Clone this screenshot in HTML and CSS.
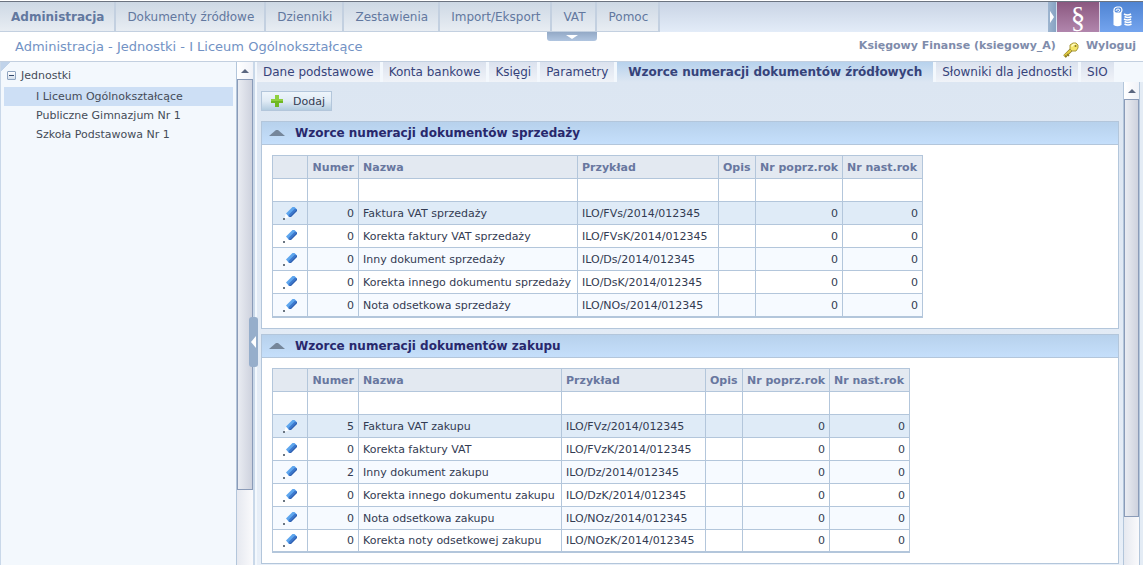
FILE: index.html
```html
<!DOCTYPE html>
<html lang="pl">
<head>
<meta charset="utf-8">
<title>Administracja - Jednostki</title>
<link rel="stylesheet" href="styles.css">
</head>
<body>
<svg class="defs" aria-hidden="true">
  <symbol id="pencil" viewBox="0 0 16 16">
    <path d="M4 8.500l3.500 3.500L2 14z" fill="#fff"/>
    <path d="M4 8.500L10.500 2h2L15 4.500 8.500 11.500 7 12z" fill="#5ea6ee"/>
    <path d="M6.500 10L13 3.500l2 1v1L8.500 12H7z" fill="#3d78cc"/>
    <path d="M7.500 12L15 4.500V6L9 12z" fill="#2b5cae"/>
    <rect x="1" y="13" width="2" height="2" fill="#6b7682"/>
  </symbol>
</svg>
<header class="topbar">
  <nav class="menu">
    <a class="menu-item current" href="#">Administracja</a>
    <a class="menu-item" href="#">Dokumenty źródłowe</a>
    <a class="menu-item" href="#">Dzienniki</a>
    <a class="menu-item" href="#">Zestawienia</a>
    <a class="menu-item" href="#">Import/Eksport</a>
    <a class="menu-item" href="#">VAT</a>
    <a class="menu-item" href="#">Pomoc</a>
  </nav>
  <div class="modules">
    <button class="module-arrow" type="button" aria-label="Moduły"><svg width="4" height="12" viewBox="0 0 4 12"><path d="M0 0l4 6-4 6z" fill="#fff"/></svg></button>
    <button class="module law" type="button">§</button>
    <button class="module finance" type="button" aria-label="Finanse">
      <svg width="20" height="22" viewBox="0 0 20 22" fill="none">
        <path d="M1.500 5v14q4 2.500 8 0V3z" fill="#fff"/>
        <path d="M2 5V4q0-2.500 3-3h3q2 .5 2 3t-2 3H4Q2 7 2 5z" fill="#5b90df" stroke="#fff" stroke-width="1.200"/>
        <path d="M4 5q0-2 2-2t1.500 2q-1 1-2 0" stroke="#fff"/>
        <path d="M12 8q3.500 2 7 0M12.500 10.500q3.500 2 7 0M12 13q3.500 2 7 0M12.500 15.500q3.500 2 7 0M12.500 18q3.500 2 7 0" stroke="#fff" stroke-width="1.700"/>
      </svg>
    </button>
  </div>
  <button class="collapse-top" type="button" aria-label="Zwiń menu"><svg width="12" height="4" viewBox="0 0 12 4"><path d="M0 0h12L6 4z" fill="#fff"/></svg></button>
</header>
<div class="subbar">
  <div class="crumbs">Administracja - Jednostki - I Liceum Ogólnokształcące</div>
  <div class="user">
    <span>Księgowy Finanse (ksiegowy_A)</span>
    <svg class="key" width="16" height="16" viewBox="0 0 16 16">
      <path d="M8 8L1.500 14.500" stroke="#8d7d23" stroke-width="3.500"/>
      <path d="M8 8L1.500 14" stroke="#e6cf45" stroke-width="2"/>
      <path d="M4 12l2 2M2 13.500l1.500 1.500" stroke="#8d7d23" stroke-width="1.500"/>
      <path d="M7 3l3-2h3l2 2v3l-2 3h-4L7 7z" fill="#f4e568" stroke="#a8983c"/>
      <path d="M8.500 4.500l2-2h2" stroke="#fffbc4" stroke-width="1.500" fill="none"/>
      <circle cx="12.500" cy="4" r="1" fill="#857823"/>
    </svg>
    <a href="#">Wyloguj</a>
  </div>
</div>
<div class="workspace">
  <aside class="side">
    <div class="tree">
      <div class="tree-root"><button class="toggle" type="button" aria-label="Zwiń Jednostki"></button><span>Jednostki</span></div>
      <a class="tree-item selected" href="#">I Liceum Ogólnokształcące</a>
      <a class="tree-item" href="#">Publiczne Gimnazjum Nr 1</a>
      <a class="tree-item" href="#">Szkoła Podstawowa Nr 1</a>
    </div>
    <div class="scrollbar side-scroll"><div class="scroll-up"></div><div class="scroll-thumb"></div></div>
  </aside>
  <div class="splitter"><button class="collapse-side" type="button" aria-label="Zwiń panel"><svg width="5" height="12" viewBox="0 0 5 12"><path d="M5 0L0 6l5 6z" fill="#fff"/></svg></button></div>
  <main class="main">
    <nav class="tabs">
      <a class="tab" href="#">Dane podstawowe</a>
      <a class="tab" href="#">Konta bankowe</a>
      <a class="tab" href="#">Księgi</a>
      <a class="tab" href="#">Parametry</a>
      <a class="tab active" href="#">Wzorce numeracji dokumentów źródłowych</a>
      <a class="tab" href="#">Słowniki dla jednostki</a>
      <a class="tab" href="#">SIO</a>
    </nav>
    <div class="pane">
      <div class="content">
        <button class="add" type="button"><svg width="12" height="12" viewBox="0 0 12 12"><path d="M4 0h4v4h4v4H8v4H4V8H0V4h4z" fill="#6fb822"/><path d="M4 0h4v4h4v2H0V4h4z" fill="#8fd03f"/></svg>Dodaj</button>
        <section class="panel">
          <h2 class="panel-title"><svg width="16" height="6" viewBox="0 0 16 6"><path d="M0 6L7 0h2l7 6z" fill="#75869a"/></svg>Wzorce numeracji dokumentów sprzedaży</h2>
          <table class="grid">
            <colgroup><col class="c-edit"><col class="c-num"><col class="c-name-a"><col class="c-ex-a"><col class="c-desc"><col class="c-prev"><col class="c-next"></colgroup>
            <thead>
              <tr><th></th><th class="r">Numer</th><th>Nazwa</th><th>Przykład</th><th>Opis</th><th>Nr poprz.rok</th><th>Nr nast.rok</th></tr>
            </thead>
            <tbody>
              <tr class="filter"><td></td><td></td><td></td><td></td><td></td><td></td><td></td></tr>
              <tr class="hot"><td class="edit"><svg width="16" height="16"><use href="#pencil"/></svg></td><td class="r">0</td><td>Faktura VAT sprzedaży</td><td>ILO/FVs/2014/012345</td><td></td><td class="r">0</td><td class="r">0</td></tr>
              <tr><td class="edit"><svg width="16" height="16"><use href="#pencil"/></svg></td><td class="r">0</td><td>Korekta faktury VAT sprzedaży</td><td>ILO/FVsK/2014/012345</td><td></td><td class="r">0</td><td class="r">0</td></tr>
              <tr class="alt"><td class="edit"><svg width="16" height="16"><use href="#pencil"/></svg></td><td class="r">0</td><td>Inny dokument sprzedaży</td><td>ILO/Ds/2014/012345</td><td></td><td class="r">0</td><td class="r">0</td></tr>
              <tr><td class="edit"><svg width="16" height="16"><use href="#pencil"/></svg></td><td class="r">0</td><td>Korekta innego dokumentu sprzedaży</td><td>ILO/DsK/2014/012345</td><td></td><td class="r">0</td><td class="r">0</td></tr>
              <tr class="alt"><td class="edit"><svg width="16" height="16"><use href="#pencil"/></svg></td><td class="r">0</td><td>Nota odsetkowa sprzedaży</td><td>ILO/NOs/2014/012345</td><td></td><td class="r">0</td><td class="r">0</td></tr>
            </tbody>
          </table>
        </section>
        <section class="panel">
          <h2 class="panel-title"><svg width="16" height="6" viewBox="0 0 16 6"><path d="M0 6L7 0h2l7 6z" fill="#75869a"/></svg>Wzorce numeracji dokumentów zakupu</h2>
          <table class="grid">
            <colgroup><col class="c-edit"><col class="c-num"><col class="c-name-b"><col class="c-ex-b"><col class="c-desc"><col class="c-prev"><col class="c-next"></colgroup>
            <thead>
              <tr><th></th><th class="r">Numer</th><th>Nazwa</th><th>Przykład</th><th>Opis</th><th>Nr poprz.rok</th><th>Nr nast.rok</th></tr>
            </thead>
            <tbody>
              <tr class="filter"><td></td><td></td><td></td><td></td><td></td><td></td><td></td></tr>
              <tr class="hot"><td class="edit"><svg width="16" height="16"><use href="#pencil"/></svg></td><td class="r">5</td><td>Faktura VAT zakupu</td><td>ILO/FVz/2014/012345</td><td></td><td class="r">0</td><td class="r">0</td></tr>
              <tr><td class="edit"><svg width="16" height="16"><use href="#pencil"/></svg></td><td class="r">0</td><td>Korekta faktury VAT</td><td>ILO/FVzK/2014/012345</td><td></td><td class="r">0</td><td class="r">0</td></tr>
              <tr class="alt"><td class="edit"><svg width="16" height="16"><use href="#pencil"/></svg></td><td class="r">2</td><td>Inny dokument zakupu</td><td>ILO/Dz/2014/012345</td><td></td><td class="r">0</td><td class="r">0</td></tr>
              <tr><td class="edit"><svg width="16" height="16"><use href="#pencil"/></svg></td><td class="r">0</td><td>Korekta innego dokumentu zakupu</td><td>ILO/DzK/2014/012345</td><td></td><td class="r">0</td><td class="r">0</td></tr>
              <tr class="alt"><td class="edit"><svg width="16" height="16"><use href="#pencil"/></svg></td><td class="r">0</td><td>Nota odsetkowa zakupu</td><td>ILO/NOz/2014/012345</td><td></td><td class="r">0</td><td class="r">0</td></tr>
              <tr><td class="edit"><svg width="16" height="16"><use href="#pencil"/></svg></td><td class="r">0</td><td>Korekta noty odsetkowej zakupu</td><td>ILO/NOzK/2014/012345</td><td></td><td class="r">0</td><td class="r">0</td></tr>
            </tbody>
          </table>
        </section>
      </div>
      <div class="scrollbar main-scroll"><div class="scroll-up"></div><div class="scroll-thumb"></div></div>
    </div>
  </main>
</div>
</body>
</html>
```
FILE: styles.css
```css
* { box-sizing: border-box; }
html, body { height: 100%; }
body {
  margin: 0;
  display: flex;
  flex-direction: column;
  overflow: hidden;
  background: #fff;
  color: #333b52;
  font-family: Verdana, "DejaVu Sans", sans-serif;
  font-size: 11px;
}
a { color: inherit; text-decoration: none; }
button { font: inherit; color: inherit; margin: 0; padding: 0; border: 0; cursor: pointer; }
svg { display: block; flex: none; }
.defs { position: absolute; width: 0; height: 0; }

.topbar {
  position: relative;
  flex: none;
  display: flex;
  justify-content: space-between;
  height: 31px;
  margin-top: 1px;
  border-top: 1px solid #6b7380;
  background: linear-gradient(#c9d4e5, #e3ecf8);
}
.menu { display: flex; }
.menu-item {
  display: flex;
  align-items: center;
  padding: 0 10px 0 11px;
  border-right: 2px solid #c3d0e0;
  border-bottom: 1px solid #c3d0e0;
  background: linear-gradient(#cdd8e4, #e8edf3);
  color: #62789f;
  font-size: 12px;
  white-space: nowrap;
}
.menu-item.current { font-weight: bold; }
.modules { display: flex; }
.module-arrow {
  display: flex;
  align-items: center;
  justify-content: center;
  width: 8px;
  margin-right: 1px;
  background: linear-gradient(90deg, #9db5d0, #86a2c2);
}
.module { display: flex; align-items: center; justify-content: center; width: 43px; }
.law {
  background: linear-gradient(#8b5880, #b186ad);
  border-right: 1px solid #d9cfe4;
  color: #fff;
  font-family: "Liberation Serif", serif;
  font-size: 29px;
  line-height: 28px;
}
.finance { background: linear-gradient(#4f84d3, #74a4ee); }
.collapse-top {
  position: absolute;
  left: 50%;
  top: 30px;
  width: 50px;
  height: 9px;
  margin-left: -25px;
  display: flex;
  align-items: center;
  justify-content: center;
  border-radius: 0 0 3px 3px;
  background: linear-gradient(#93a9c6, #b0c5e0);
}

.subbar {
  flex: none;
  display: flex;
  justify-content: space-between;
  height: 29px;
  padding: 0 7px 0 15px;
}
.crumbs { font-size: 13px; line-height: 29px; color: #7292c4; }
.user {
  display: flex;
  align-items: center;
  gap: 7px;
  height: 26px;
  font-weight: bold;
  color: #7f8cab;
}
.key { align-self: flex-end; }

.workspace { flex: 1; min-height: 0; display: flex; border-top: 1px solid #c3d0e0; }
.side {
  flex: none;
  display: flex;
  width: 253px;
  background: linear-gradient(135deg, #c0d3ea 7px, #f3f8fd 7px);
  border-left: 1px solid #c9d8e9;
}
.tree { flex: 1; padding: 4px 3px; color: #454c58; }
.tree-root { display: flex; align-items: center; gap: 5px; height: 19px; padding-left: 3px; margin-bottom: 2px; }
.toggle {
  position: relative;
  width: 9px;
  height: 9px;
  border: 1px solid #8fa5c1;
  border-radius: 1px;
  background: linear-gradient(#fff, #d4dfec);
}
.toggle::after { content: ""; position: absolute; left: 1px; top: 3px; width: 5px; height: 1px; background: #33496b; }
.tree-item { display: block; height: 19px; line-height: 19px; padding-left: 32px; white-space: nowrap; }
.tree-item.selected { background: #cddff5; }

.scrollbar {
  flex: none;
  display: flex;
  flex-direction: column;
  width: 17px;
  border-left: 1px solid #b3c6db;
  background: linear-gradient(90deg, #e6e9f0, #fafafc);
}
.scroll-up {
  height: 17px;
  display: flex;
  align-items: center;
  justify-content: center;
  background: linear-gradient(90deg, #fff, #f0f2f8);
}
.scroll-up::before { content: ""; border: 4px solid transparent; border-top: 0; border-bottom-color: #5b6780; }
.scroll-thumb { border: 1px solid #8a9bb8; background: linear-gradient(90deg, #e9ecf2, #ced2de); }
.side-scroll .scroll-thumb { height: 411px; }
.main-scroll .scroll-thumb { height: 418px; }
.main-scroll { border-right: 1px solid #b3c6db; }

.splitter { position: relative; flex: none; width: 4px; background: linear-gradient(90deg, #c9d8e9 2px, #f3f8fd 2px); }
.collapse-side {
  position: absolute;
  left: -4px;
  top: 50%;
  width: 9px;
  height: 50px;
  margin-top: 3px;
  display: flex;
  align-items: center;
  justify-content: center;
  border-radius: 3px;
  background: #96aecb;
}

.main { flex: 1; min-width: 0; display: flex; flex-direction: column; background: #f3f8fd; }
.tabs { flex: none; display: flex; gap: 3px; height: 20px; }
.tab {
  padding: 0 6px;
  background: linear-gradient(#dbe2ee, #f0f3f8);
  color: #36437a;
  font-size: 12px;
  line-height: 20px;
  white-space: nowrap;
}
.tab.active { padding: 0 11px; background: linear-gradient(#b7d2ed, #dce6f2); font-weight: bold; }
.pane { flex: 1; min-height: 0; display: flex; padding-right: 3px; background: #e4ecf5; }
.content { flex: 1; min-width: 0; padding: 9px 4px 0; overflow: hidden; background: linear-gradient(#dce6f2, #e8eff8); }
.add {
  display: flex;
  align-items: center;
  gap: 10px;
  height: 20px;
  margin-bottom: 10px;
  padding: 0 6px 0 9px;
  border: 1px solid #b3c6db;
  background: linear-gradient(#eef5fb, #e0ebf5 50%, #b3cce0);
}
.panel { margin-bottom: 5px; padding-bottom: 10px; border: 1px solid #b3c6db; background: #fff; }
.panel-title {
  display: flex;
  align-items: center;
  gap: 10px;
  height: 23px;
  margin: 0 0 10px;
  padding: 0 7px;
  border-bottom: 1px solid #b3c6db;
  background: linear-gradient(#b7d1ec, #c5dffb);
  color: #28286c;
  font-size: 12px;
}

.grid { table-layout: fixed; width: 0; margin-left: 10px; border-collapse: collapse; }
.grid th, .grid td { height: 23px; padding: 2px 4px 0; border: 1px solid #b3c6db; text-align: left; line-height: 14px; white-space: nowrap; }
.grid tr:last-child td { border-bottom-width: 2px; }
.grid th { background: #e3e9f1; color: #68779f; }
.grid .r { text-align: right; }
.hot { background: #dfebf7; }
.alt { background: #f6faff; }
.grid .edit { padding-top: 0; }
.grid .edit svg { margin: 0 auto; }
.c-edit { width: 35px; }
.c-num { width: 51px; }
.c-name-a { width: 219px; }
.c-ex-a { width: 141px; }
.c-name-b { width: 203px; }
.c-ex-b { width: 144px; }
.c-desc { width: 37px; }
.c-prev { width: 87px; }
.c-next { width: 80px; }
```
